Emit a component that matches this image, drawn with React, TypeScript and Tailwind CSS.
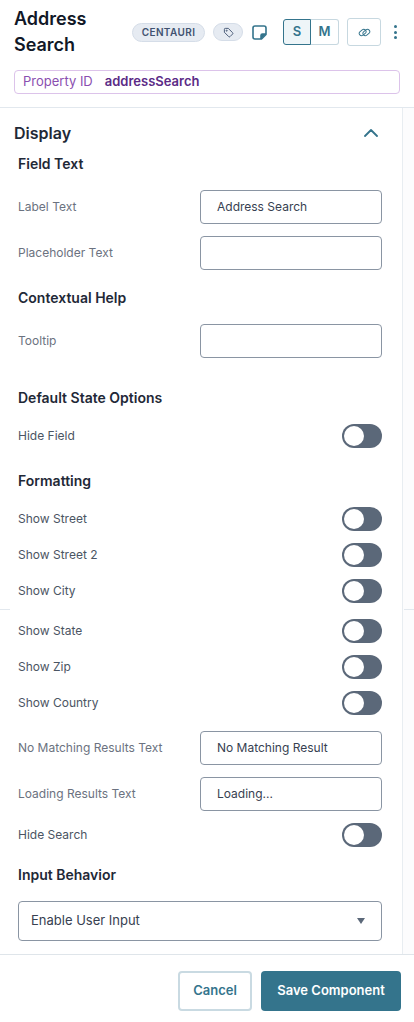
function Heading({ children, className = "" }: { children: string; className?: string }) {
  return <h3 className={`text-[14px] leading-[20px] font-semibold text-[#1f2937] ${className}`}>{children}</h3>;
}

function TextRow({ label, value = "", className = "" }: { label: string; value?: string; className?: string }) {
  return (
    <div className={`flex h-[34px] items-center justify-between ${className}`}>
      <span className="text-[12px] text-[#6b7280]">{label}</span>
      <div className="flex h-[34px] w-[182px] items-center rounded-[4px] border border-[#8a95a3] bg-white px-4 text-[12px] text-[#374151]">
        {value}
      </div>
    </div>
  );
}

function ToggleRow({ label, className = "" }: { label: string; className?: string }) {
  return (
    <div className={`flex h-6 items-center justify-between ${className}`}>
      <span className="text-[12px] text-[#4b5563]">{label}</span>
      <div className="flex h-6 w-10 items-center rounded-full bg-[#5b6879] pl-[2px]">
        <div className="h-5 w-5 rounded-full bg-white" />
      </div>
    </div>
  );
}

export default function App() {
  return (
    <div className="flex h-[1022px] w-[414px] flex-col overflow-hidden bg-white font-['Inter',sans-serif]">
      <header className="px-[14px] pt-[6px]">
        <div className="flex items-center">
          <h1 className="w-[118px] text-[18px] leading-[26px] font-semibold text-[#111827]">Address Search</h1>
          <div className="flex items-center">
            <span className="flex h-[19px] w-[73px] items-center justify-center rounded-full border border-[#d5dde8] bg-[#e6ebf2] text-[10px] font-semibold tracking-[0.4px] text-[#3f5270]">
              CENTAURI
            </span>
            <span className="ml-2 flex h-[18px] w-[30px] items-center justify-center rounded-full border border-[#d5dde8] bg-[#e6ebf2]">
              <svg width="11" height="11" viewBox="0 0 24 24" fill="none" stroke="#3f5270" strokeWidth="2" strokeLinejoin="round">
                <path d="M3 5a2 2 0 0 1 2-2h6.5L21 12.5a2 2 0 0 1 0 2.8L15.3 21a2 2 0 0 1-2.8 0L3 11.5z" />
                <circle cx="8" cy="8" r="1.2" />
              </svg>
            </span>
            <svg className="ml-[9px]" width="15" height="15" viewBox="0 0 15 15" fill="none" stroke="#34748c" strokeWidth="1.6" strokeLinejoin="round">
              <path d="M3 1h9a2 2 0 0 1 2 2v6.5L9.5 14H3a2 2 0 0 1-2-2V3a2 2 0 0 1 2-2z" />
              <path d="M14 9h-3.5A1.5 1.5 0 0 0 9 10.5V14" fill="#34748c" />
            </svg>
            <div className="ml-[16px] flex h-[26px] w-[56px] text-[13px] font-semibold">
              <span className="flex w-[28px] items-center justify-center rounded-l-[3px] border border-[#34748c] bg-[#eef5f8] text-[#34748c]">S</span>
              <span className="flex w-[28px] items-center justify-center rounded-r-[3px] border border-l-0 border-[#c7d8e0] text-[#34748c]">M</span>
            </div>
            <span className="ml-[8px] flex h-[28px] w-[34px] items-center justify-center rounded-[3px] border border-[#c7d8e0]">
              <svg width="13" height="13" viewBox="0 0 14 14" fill="none" stroke="#34748c" strokeWidth="1">
                <rect x="1" y="4.5" width="8" height="5" rx="2.5" transform="rotate(-40 5 7)" />
                <rect x="5" y="4.5" width="8" height="5" rx="2.5" transform="rotate(-40 9 7)" />
              </svg>
            </span>
            <span className="ml-[13px] flex flex-col gap-[2.5px]">
              <span className="h-[3px] w-[3px] rounded-full bg-[#34748c]" />
              <span className="h-[3px] w-[3px] rounded-full bg-[#34748c]" />
              <span className="h-[3px] w-[3px] rounded-full bg-[#34748c]" />
            </span>
          </div>
        </div>
        <div className="mt-[12px] flex h-6 items-center rounded-[4px] border border-[#dcc3ea] px-2 text-[13px]">
          <span className="text-[#8a4fb0]">Property ID</span>
          <span className="ml-3 font-semibold text-[#5b2a86]">addressSearch</span>
        </div>
      </header>

      <div className="relative mt-[13px] flex min-h-0 flex-1 border-t border-[#e2e8ee]">
        <div className="absolute top-[501px] left-0 h-px w-[10px] bg-[#e2e8ee]" />
        <div className="absolute top-[501px] right-0 h-px w-[10px] bg-[#e2e8ee]" />
        <main className="w-[403px] border-r border-[#e8edf1] px-[14px] pt-[15px]">
          <div className="flex items-center justify-between pr-[10px]">
            <h2 className="text-[16px] leading-[20px] font-semibold text-[#1f2937]">Display</h2>
            <svg width="14" height="8" viewBox="0 0 14 8" fill="none" stroke="#34748c" strokeWidth="1.8" strokeLinecap="round" strokeLinejoin="round">
              <path d="M1 7l6-6 6 6" />
            </svg>
          </div>
          <div className="pl-1 pr-[6px]">
            <Heading className="mt-[11px]">Field Text</Heading>
            <TextRow label="Label Text" value="Address Search" className="mt-4" />
            <TextRow label="Placeholder Text" className="mt-3" />
            <Heading className="mt-[18px]">Contextual Help</Heading>
            <TextRow label="Tooltip" className="mt-4" />
            <Heading className="mt-[30px]">Default State Options</Heading>
            <ToggleRow label="Hide Field" className="mt-[16px]" />
            <Heading className="mt-[23px]">Formatting</Heading>
            <ToggleRow label="Show Street" className="mt-[16px]" />
            <ToggleRow label="Show Street 2" className="mt-3" />
            <ToggleRow label="Show City" className="mt-3" />
            <ToggleRow label="Show State" className="mt-4" />
            <ToggleRow label="Show Zip" className="mt-3" />
            <ToggleRow label="Show Country" className="mt-3" />
            <TextRow label="No Matching Results Text" value="No Matching Result" className="mt-4" />
            <TextRow label="Loading Results Text" value="Loading..." className="mt-3" />
            <ToggleRow label="Hide Search" className="mt-3" />
            <Heading className="mt-[18px]">Input Behavior</Heading>
            <div className="mt-4 flex h-10 items-center justify-between rounded-[4px] border border-[#8a95a3] pr-[16px] pl-[12px] text-[13px] text-[#374151]">
              Enable User Input
              <span className="h-0 w-0 border-x-[4.5px] border-t-[6px] border-x-transparent border-t-[#5b6879]" />
            </div>
          </div>
        </main>
        <div className="flex-1 bg-[#fcfcfd]" />
      </div>

      <footer className="flex h-[68px] shrink-0 justify-end gap-[9px] border-t border-[#dfe5ea] bg-white pt-4 pr-[13px]">
        <button className="h-10 w-[74px] rounded-[4px] border-2 border-[#c9dae2] text-[13px] font-semibold text-[#34748c]">Cancel</button>
        <button className="h-10 w-[140px] rounded-[4px] bg-[#34748c] text-[13px] font-semibold text-white">Save Component</button>
      </footer>
    </div>
  );
}
